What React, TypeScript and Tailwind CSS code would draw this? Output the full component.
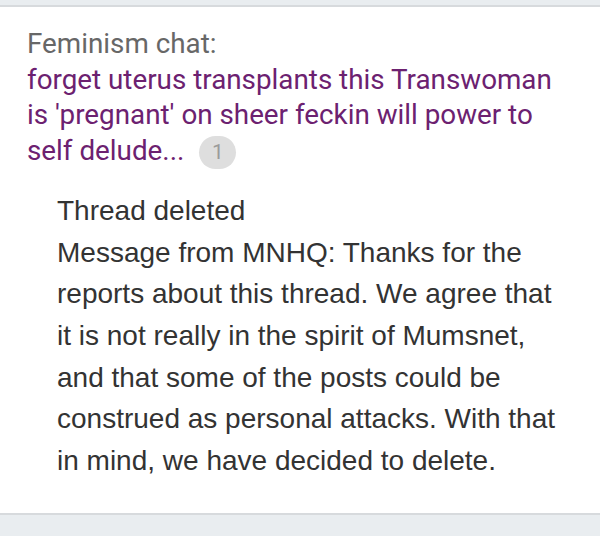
export default function App() {
    return (
        <div className="flex h-[536px] w-full flex-col overflow-hidden bg-white">
            {/* Top strip */}
            <div className="h-[7px] shrink-0 border-b-2 border-[#d7dadd] bg-[#e9edf0]" />

            <main className="flex-1 pl-[27px] pr-[30px] pt-[19px]">
                {/* Thread heading */}
                <div className="font-['Roboto',sans-serif] text-[27.8px] leading-[35.7px]">
                    <div className="text-[#676767]">Feminism chat:</div>
                    <div className="text-[#6c2170]">
                        <span>
                            forget uterus transplants this Transwoman is 'pregnant' on sheer
                            feckin will power to self delude...
                        </span>
                        <span className="ml-[15px] inline-flex h-[33px] w-[37px] items-center justify-center rounded-full bg-[#dedede] align-middle text-[21px] leading-none text-[#9b9b9b]">
                            1
                        </span>
                    </div>
                </div>

                {/* Deleted message */}
                <div className="ml-[30px] mt-[21px] font-['Liberation_Sans',Arial,sans-serif] text-[28px] leading-[41.6px] text-[#333333]">
                    <p>Thread deleted</p>
                    <p>
                        Message from MNHQ: Thanks for the reports about this thread. We agree
                        that it is not really in the spirit of Mumsnet, and that some of the
                        posts could be construed as personal attacks. With that in mind, we
                        have decided to delete.
                    </p>
                </div>
            </main>

            {/* Bottom strip */}
            <div className="h-[23px] shrink-0 border-t-2 border-[#d7dadd] bg-[#e9edf0]" />
        </div>
    );
}
